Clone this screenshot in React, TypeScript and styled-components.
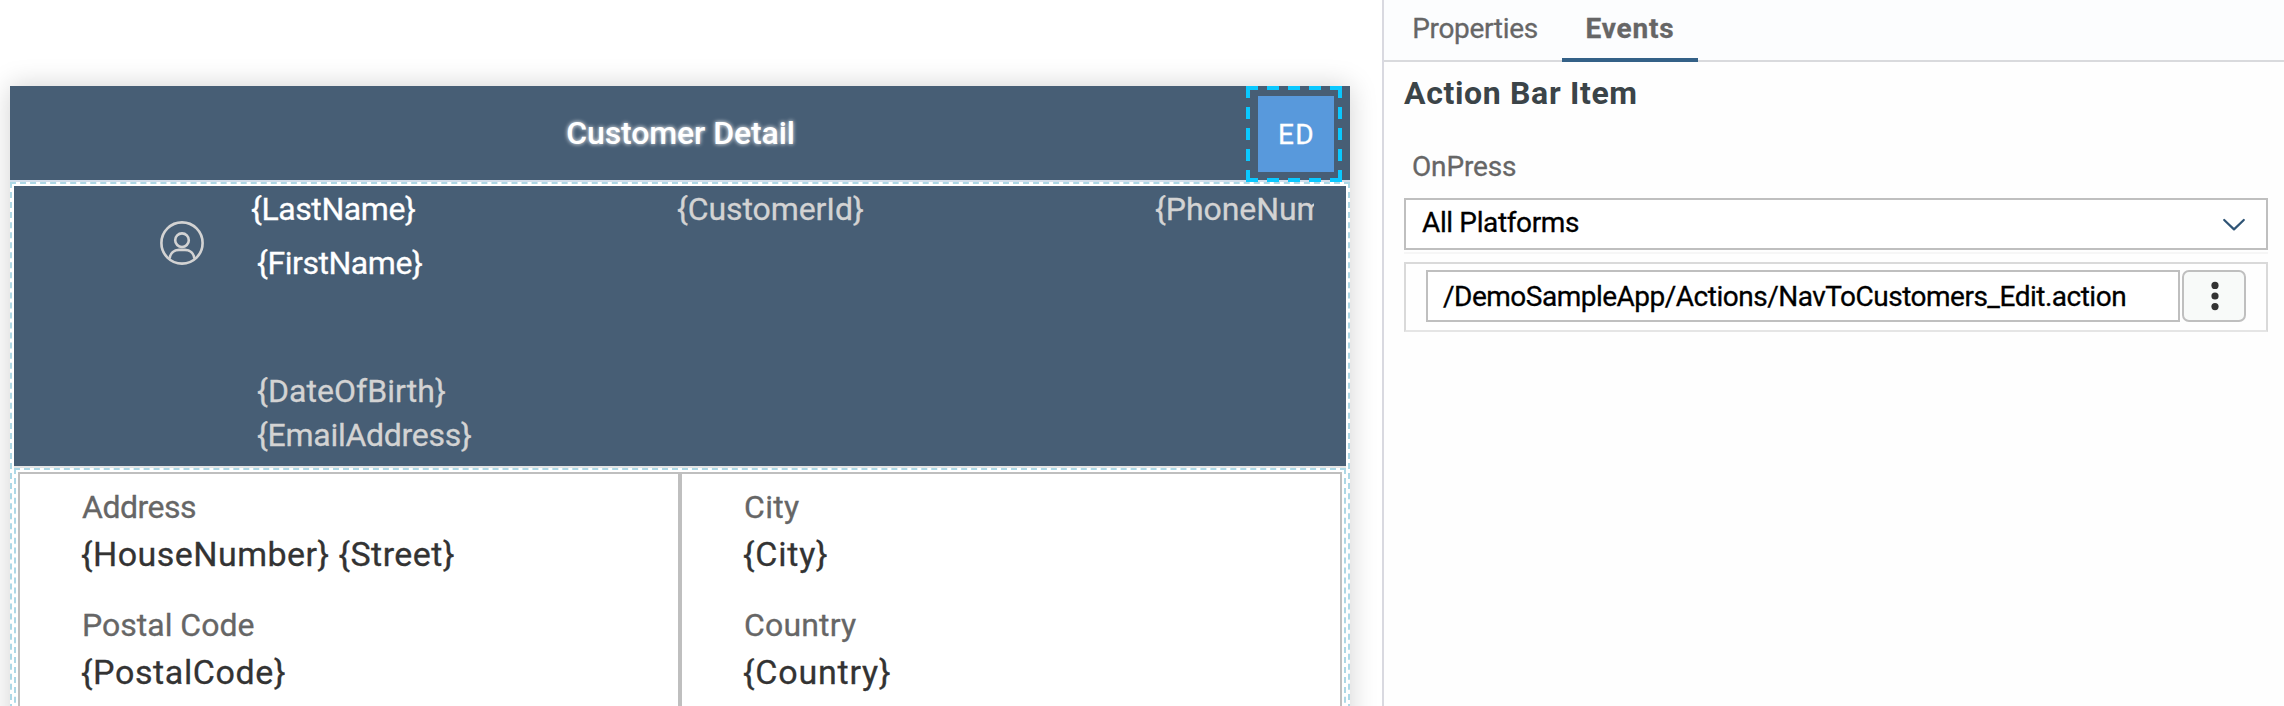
import React from 'react';
import styled, { createGlobalStyle } from 'styled-components';

const GlobalStyle = createGlobalStyle`
  * { box-sizing: border-box; }
  body {
    margin: 0;
    overflow: hidden;
    background: #fff;
    font-family: Roboto, "Liberation Sans", sans-serif;
    -webkit-text-stroke: 0.3px currentColor;
  }
`;

const Workspace = styled.div`
  display: flex;
  height: 706px;
  overflow: hidden;
`;

/* ---------- canvas ---------- */

const Canvas = styled.main`
  flex: none;
  width: 1382px;
  padding: 86px 32px 0 10px;
  overflow: hidden;
`;

const Device = styled.div`
  width: 1340px;
  height: 1180px;
  background: #fff;
  box-shadow: 0 0 26px rgba(0, 0, 0, 0.18);
`;

const ActionBar = styled.header`
  display: grid;
  grid-template-columns: 1fr auto 1fr;
  height: 96px;
  padding-right: 8px;
  background: #475e75;
  box-shadow: inset 0 -2px 0 #d3deeb;
`;

const ActionBarTitle = styled.h1`
  grid-column: 2;
  margin: 0 0 0 9px;
  color: #fff;
  font-size: 32px;
  font-weight: 500;
  line-height: 94px;
  letter-spacing: -0.1px;
  text-shadow: 0 0 4px #fff;
  -webkit-text-stroke: 0;
`;

const ActionItem = styled.div`
  position: relative;
  justify-self: end;
  width: 96px;
  height: 96px;
  padding: 10px 8px 10px 12px;
`;

const SelectionOutline = styled.svg`
  position: absolute;
  inset: 0;
`;

const ActionItemFace = styled.div`
  width: 76px;
  height: 76px;
  background: #5899dc;
  color: #fff;
  font-size: 28px;
  letter-spacing: 1.4px;
  line-height: 77px;
  text-align: center;
  text-indent: 1px;
`;

const Section = styled.section<{ $height: number }>`
  height: ${(p) => p.$height}px;
  padding: 2px;
  border: 2px dashed #add8e6;
`;

const ProfileHeader = styled.div`
  display: flex;
  height: 280px;
  padding: 1px 32px 0 146px;
  background: #475e75;
`;

const Avatar = styled.svg`
  flex: none;
  width: 44px;
  height: 44px;
  margin: 34px 47px 0 0;
`;

const ProfileColumn = styled.div<{ $width: number }>`
  flex: none;
  width: ${(p) => p.$width}px;
  overflow: hidden;
  white-space: nowrap;
`;

const ProfileText = styled.div<{ $strong?: boolean; $indent?: number; $gap?: number; $spacing?: number }>`
  margin: ${(p) => p.$gap ?? 0}px 0 0 ${(p) => p.$indent ?? 0}px;
  color: ${(p) => (p.$strong ? '#fff' : '#d3d3d3')};
  font-size: 32px;
  line-height: 44px;
  letter-spacing: ${(p) => p.$spacing ?? 0}px;
`;

const FormSection = styled.div`
  border-top: 2px solid #e5e5e5;
`;

const FormGrid = styled.div`
  display: grid;
  grid-template-columns: 1fr 1fr;
  height: 800px;
`;

const FormCell = styled.div`
  padding: 11px 0 0 62px;
  border: 2px solid #bfbfbf;
`;

const Field = styled.div`
  height: 118px;
`;

const FieldLabel = styled.div<{ $spacing: number }>`
  color: #666;
  font-size: 32px;
  line-height: 44px;
  letter-spacing: ${(p) => p.$spacing}px;
`;

const FieldValue = styled.div<{ $spacing: number }>`
  margin: 1px 0 0 -1px;
  color: #333;
  font-size: 34px;
  line-height: 48px;
  letter-spacing: ${(p) => p.$spacing}px;
`;

/* ---------- inspector ---------- */

const Inspector = styled.aside`
  flex: 1;
  border-left: 2px solid #d9d9e0;
  background: #fefefe;
`;

const Tabs = styled.nav`
  display: flex;
  gap: 2px;
  height: 62px;
  padding-left: 6px;
  background: #fcfdfe;
  border-bottom: 2px solid #d9dadd;
`;

const Tab = styled.div<{ $width: number; $active?: boolean; $spacing: number }>`
  width: ${(p) => p.$width}px;
  height: 62px;
  border-bottom: ${(p) => (p.$active ? '4px solid #346187' : 'none')};
  color: #666;
  font-size: 28px;
  font-weight: ${(p) => (p.$active ? 700 : 400)};
  letter-spacing: ${(p) => p.$spacing}px;
  line-height: 58px;
  text-align: center;
`;

const Panel = styled.div`
  padding: 11px 16px 0 20px;
`;

const Heading = styled.h2`
  margin: 0 0 36px 0;
  color: #3b4448;
  font-size: 32px;
  font-weight: 700;
  letter-spacing: 0.66px;
  line-height: 40px;
  -webkit-text-stroke: 0;
`;

const PropertyLabel = styled.div`
  margin: 0 0 13px 8px;
  color: #666;
  font-size: 28px;
  letter-spacing: -0.15px;
  line-height: 36px;
`;

const Select = styled.div`
  display: flex;
  justify-content: space-between;
  height: 52px;
  padding: 0 20px 0 16px;
  border: 2px solid #bfbfbf;
  background: #fff;
  color: #000;
  font-size: 28px;
  letter-spacing: -0.37px;
  line-height: 45px;
`;

const Chevron = styled.svg`
  width: 24px;
  height: 14px;
  margin-top: 18px;
`;

const Divider = styled.div`
  height: 2px;
  margin: 2px 0 8px;
  background: #f6f6f6;
`;

const ActionRow = styled.div`
  display: flex;
  gap: 2px;
  height: 70px;
  padding: 6px 20px 6px 20px;
  border: 2px solid #d9d9d9;
  border-bottom-color: #e5e5e5;
`;

const ActionInput = styled.div`
  flex: 1;
  height: 52px;
  padding-left: 15px;
  border: 2px solid #bfbfbf;
  background: #fff;
  color: #000;
  font-size: 28px;
  letter-spacing: -0.5px;
  line-height: 49px;
`;

const MenuButton = styled.div`
  display: grid;
  place-items: center;
  width: 64px;
  height: 52px;
  padding-left: 2px;
  border: 2px solid #bfbfbf;
  border-radius: 7px;
  background: #f8faf9;
`;

type FieldData = { label: string; value: string; labelSpacing: number; valueSpacing: number };

const columns: FieldData[][] = [
  [
    { label: 'Address', value: '{HouseNumber} {Street}', labelSpacing: -0.5, valueSpacing: 0.47 },
    { label: 'Postal Code', value: '{PostalCode}', labelSpacing: 0, valueSpacing: 0.61 },
  ],
  [
    { label: 'City', value: '{City}', labelSpacing: 0.31, valueSpacing: 0.78 },
    { label: 'Country', value: '{Country}', labelSpacing: 0.17, valueSpacing: 0.8 },
  ],
];

export default function App() {
  return (
    <Workspace>
      <GlobalStyle />
      <Canvas>
        <Device>
          <ActionBar>
            <ActionBarTitle>Customer Detail</ActionBarTitle>
            <ActionItem>
              <ActionItemFace>ED</ActionItemFace>
              <SelectionOutline width="96" height="96" fill="none" stroke="#0ac8ff" strokeWidth="4" strokeDasharray="12 9">
                <path d="M0 2H96M0 94H96M2 0V96M94 0V96" />
              </SelectionOutline>
            </ActionItem>
          </ActionBar>
          <Section $height={1080}>
            <ProfileHeader>
              <Avatar viewBox="0 0 44 44" fill="none" stroke="#d3d3d3" strokeWidth="2.6">
                <circle cx="22" cy="22" r="20.6" />
                <circle cx="22" cy="19.2" r="6.8" />
                <path d="M9.6 37.6C10.2 32 14 28.9 19 28.9H25C30 28.9 33.8 32 34.4 37.6" />
              </Avatar>
              <ProfileColumn $width={426}>
                <ProfileText $strong $spacing={-0.41}>{'{LastName}'}</ProfileText>
                <ProfileText $strong $indent={6} $gap={10} $spacing={-0.44}>{'{FirstName}'}</ProfileText>
                <ProfileText $indent={6} $gap={84} $spacing={0.06}>{'{DateOfBirth}'}</ProfileText>
                <ProfileText $indent={6} $spacing={-0.27}>{'{EmailAddress}'}</ProfileText>
              </ProfileColumn>
              <ProfileColumn $width={478}>
                <ProfileText $spacing={-0.08}>{'{CustomerId}'}</ProfileText>
              </ProfileColumn>
              <ProfileColumn $width={159}>
                <ProfileText $spacing={-0.05}>{'{PhoneNumber}'}</ProfileText>
              </ProfileColumn>
            </ProfileHeader>
            <FormSection>
              <Section as="div" $height={792}>
                <FormGrid>
                  {columns.map((fields, i) => (
                    <FormCell key={i}>
                      {fields.map((f) => (
                        <Field key={f.label}>
                          <FieldLabel $spacing={f.labelSpacing}>{f.label}</FieldLabel>
                          <FieldValue $spacing={f.valueSpacing}>{f.value}</FieldValue>
                        </Field>
                      ))}
                    </FormCell>
                  ))}
                </FormGrid>
              </Section>
            </FormSection>
          </Section>
        </Device>
      </Canvas>
      <Inspector>
        <Tabs>
          <Tab $width={170} $spacing={-0.32}>Properties</Tab>
          <Tab $width={136} $active $spacing={0.86}>Events</Tab>
        </Tabs>
        <Panel>
          <Heading>Action Bar Item</Heading>
          <PropertyLabel>OnPress</PropertyLabel>
          <Select>
            All Platforms
            <Chevron viewBox="0 0 24 14" fill="none" stroke="#2f5475" strokeWidth="2.2" strokeLinecap="round" strokeLinejoin="round">
              <path d="M2.2 2L12 11.4L21.8 2" />
            </Chevron>
          </Select>
          <Divider />
          <ActionRow>
            <ActionInput>/DemoSampleApp/Actions/NavToCustomers_Edit.action</ActionInput>
            <MenuButton>
              <svg width="8" height="30" viewBox="0 0 8 30" fill="#333">
                <circle cx="4" cy="4.4" r="3.6" />
                <circle cx="4" cy="15" r="3.6" />
                <circle cx="4" cy="25.6" r="3.6" />
              </svg>
            </MenuButton>
          </ActionRow>
        </Panel>
      </Inspector>
    </Workspace>
  );
}
